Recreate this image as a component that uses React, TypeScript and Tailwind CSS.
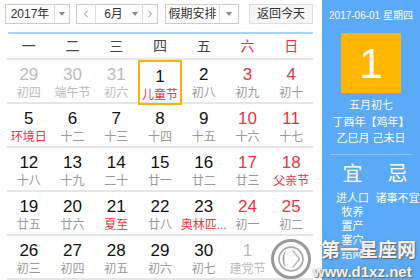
import { ChevronLeft, ChevronRight } from 'lucide-react';

type Day = { n: number; sub: string; dim?: boolean; red?: boolean; subRed?: boolean; today?: boolean };

const weekdays = ['一', '二', '三', '四', '五', '六', '日'];

const weeks: Day[][] = [
  [
    { n: 29, sub: '初四', dim: true },
    { n: 30, sub: '端午节', dim: true },
    { n: 31, sub: '初六', dim: true },
    { n: 1, sub: '儿童节', subRed: true, today: true },
    { n: 2, sub: '初八' },
    { n: 3, sub: '初九', red: true },
    { n: 4, sub: '初十', red: true },
  ],
  [
    { n: 5, sub: '环境日', subRed: true },
    { n: 6, sub: '十二' },
    { n: 7, sub: '十三' },
    { n: 8, sub: '十四' },
    { n: 9, sub: '十五' },
    { n: 10, sub: '十六', red: true },
    { n: 11, sub: '十七', red: true },
  ],
  [
    { n: 12, sub: '十八' },
    { n: 13, sub: '十九' },
    { n: 14, sub: '二十' },
    { n: 15, sub: '廿一' },
    { n: 16, sub: '廿二' },
    { n: 17, sub: '廿三', red: true },
    { n: 18, sub: '父亲节', red: true, subRed: true },
  ],
  [
    { n: 19, sub: '廿五' },
    { n: 20, sub: '廿六' },
    { n: 21, sub: '夏至', subRed: true },
    { n: 22, sub: '廿八' },
    { n: 23, sub: '奥林匹...', subRed: true },
    { n: 24, sub: '初一', red: true },
    { n: 25, sub: '初二', red: true },
  ],
  [
    { n: 26, sub: '初三' },
    { n: 27, sub: '初四' },
    { n: 28, sub: '初五' },
    { n: 29, sub: '初六' },
    { n: 30, sub: '初七' },
    { n: 1, sub: '建党节', dim: true },
    { n: 2, sub: '', dim: true },
  ],
];

const yi = ['进人口', '牧养', '置产', '塞穴', '结网'];

function Caret() {
  return <span className="block w-0 h-0 border-x-[3px] border-x-transparent border-t-[4px] border-t-[#888]" />;
}

function DayCell({ d }: { d: Day }) {
  const num = d.dim ? 'text-[#bbb]' : d.red ? 'text-[#e8353c]' : 'text-[#111]';
  const sub = d.subRed ? 'text-[#e8353c]' : d.dim ? 'text-[#bbb]' : 'text-[#999]';
  return (
    <div
      className={`h-full flex flex-col items-center pt-[5px] ${d.today ? 'border-2 border-[#f8b400] pt-[3px]' : ''}`}
    >
      <span className={`text-[17px] leading-[20px] ${num}`}>{d.n}</span>
      <span className={`text-[12px] leading-[16px] whitespace-nowrap ${sub}`}>{d.sub}</span>
    </div>
  );
}

export default function App() {
  return (
    <div
      className="relative w-[420px] h-[280px] flex bg-white overflow-hidden"
      style={{ fontFamily: '"Liberation Sans", "Noto Sans CJK SC", sans-serif' }}
    >
      {/* Left: calendar */}
      <div className="w-[322px] flex flex-col">
        <div className="flex items-center h-[20px] mt-[4px] text-[12px] text-[#333]">
          <div className="ml-[5px] w-[65px] h-full flex border border-[#ccc]">
            <span className="flex-1 flex items-center justify-center">2017年</span>
            <span className="w-[15px] border-l border-[#ddd] flex items-center justify-center"><Caret /></span>
          </div>
          <div className="ml-[6px] w-[82px] h-full flex border border-[#ccc]">
            <span className="w-[19px] border-r border-[#ddd] flex items-center justify-center">
              <ChevronLeft className="w-[12px] h-[12px] text-[#666]" strokeWidth={1.5} />
            </span>
            <span className="flex-1 flex items-center justify-center gap-[9px] pl-[4px]">
              6月 <Caret />
            </span>
            <span className="w-[15px] border-l border-[#ddd] flex items-center justify-center">
              <ChevronRight className="w-[12px] h-[12px] text-[#666]" strokeWidth={1.5} />
            </span>
          </div>
          <div className="ml-[7px] w-[74px] h-full flex border border-[#ccc]">
            <span className="flex-1 flex items-center justify-center">假期安排</span>
            <span className="w-[19px] border-l border-[#ddd] flex items-center justify-center"><Caret /></span>
          </div>
          <div className="ml-[10px] w-[64px] h-full flex items-center justify-center border border-[#ddd] bg-[#f6f6f6]">
            返回今天
          </div>
        </div>

        <div className="ml-[8px] mt-[8px] w-[305px] h-[2px] bg-[#a6d3fa]" />

        <div className="ml-[7px] w-[306px] grid grid-cols-7 h-[26px] border-b-2 border-[#e6e6e6] text-[14px] items-center text-[#444]">
          {weekdays.map((w, i) => (
            <span key={w} className={`text-center ${i >= 5 ? 'text-[#e8353c]' : ''}`}>{w}</span>
          ))}
        </div>

        <div className="ml-[7px] w-[306px] flex flex-col">
          {weeks.map((wk, i) => (
            <div key={i} className="grid grid-cols-7 h-[44px] border-b-2 border-[#e6e6e6]">
              {wk.map((d, j) => (
                <DayCell key={j} d={d} />
              ))}
            </div>
          ))}
        </div>
      </div>

      {/* Right: day detail */}
      <div className="flex-1 bg-[#5aaaf8] text-white flex flex-col items-center">
        <div className="mt-[9px] text-[10px] leading-[13px] whitespace-nowrap">2017-06-01 星期四</div>
        <div className="mt-[11px] w-[60px] h-[60px] bg-[#ffb600] flex items-center justify-center text-[42px]">1</div>
        <div className="mt-[4px] text-[11px] leading-[16.5px] text-center whitespace-nowrap">
          <div>五月初七</div>
          <div>丁酉年【鸡年】</div>
          <div>乙巳月 己未日</div>
        </div>
        <div className="mt-[7px] w-[82px] h-px bg-[#8cc4fa]" />
        <div className="mt-[8px] w-full pl-[8px] grid grid-cols-2 text-center">
          <div className="flex flex-col items-center">
            <span className="text-[20px] leading-[22px]">宜</span>
            <div className="mt-[6px] text-[11px] leading-[14px]">
              {yi.map((t) => (
                <div key={t}>{t}</div>
              ))}
            </div>
          </div>
          <div className="flex flex-col items-center">
            <span className="text-[20px] leading-[22px]">忌</span>
            <div className="mt-[6px] text-[11px] leading-[14px] whitespace-nowrap">诸事不宜</div>
          </div>
        </div>
      </div>

      {/* Watermark */}
      <div className="absolute left-[271px] top-[239px] w-[40px] h-[40px] rounded-full bg-white/80 border-[3px] border-[#999] flex items-center justify-center">
        <svg viewBox="0 0 40 40" className="w-[34px] h-[34px]">
          <circle cx="20" cy="20" r="14" fill="none" stroke="#aaa" strokeWidth="2" />
          <path d="M14 9 Q6 20 14 31 Q10 20 14 9Z" fill="#999" />
          <path d="M22 10 L30 20 L22 30" fill="none" stroke="#bbb" strokeWidth="2" />
        </svg>
      </div>
      <div className="absolute left-[321px] top-[240px] text-[19px] leading-[22px] font-bold text-white/90 whitespace-nowrap [text-shadow:0_0_2px_#777,1px_1px_1px_#666]">
        第一星座网
      </div>
      <div className="absolute left-[313px] top-[263px] text-[15px] leading-[17px] font-bold text-white/90 whitespace-nowrap [text-shadow:0_0_2px_#777,1px_1px_1px_#666]">
        www.d1xz.net
      </div>
    </div>
  );
}
